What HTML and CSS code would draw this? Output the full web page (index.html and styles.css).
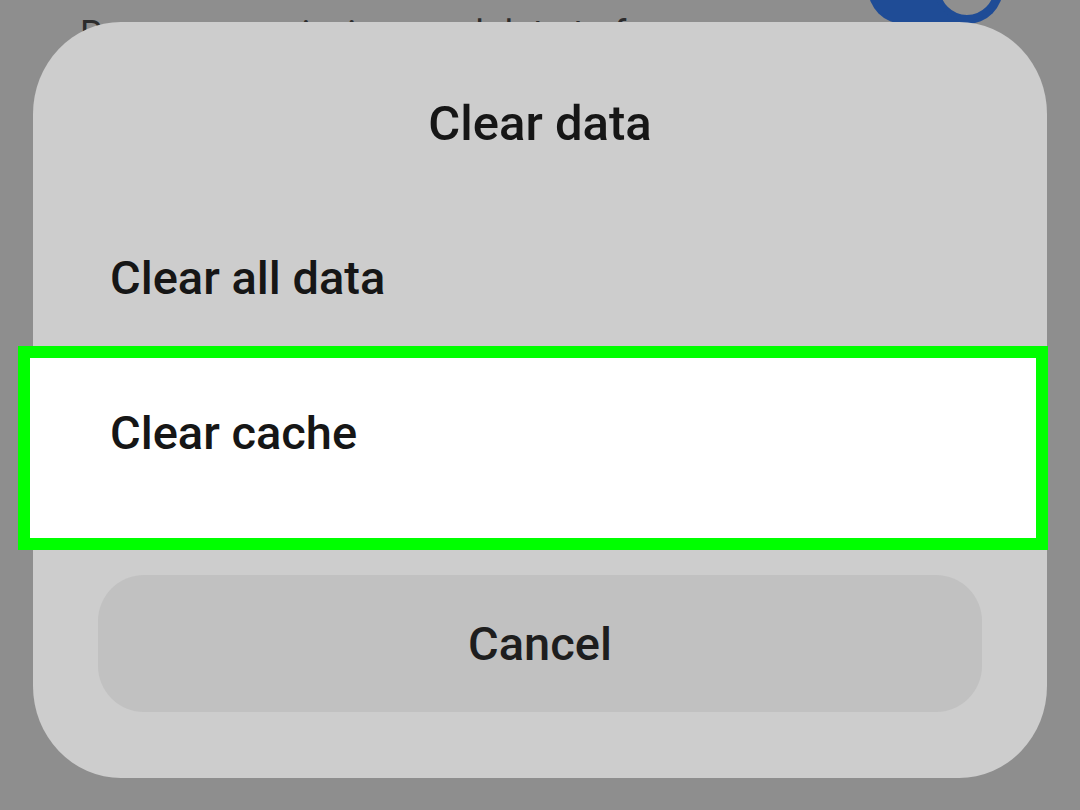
FILE: index.html
```html
<!DOCTYPE html>
<html lang="en">
<head>
<meta charset="utf-8">
<title>Clear data</title>
<link rel="stylesheet" href="styles.css">
</head>
<body>
<div class="screen">
  <div class="setting-row">
    <span class="setting-text">Remove permissions and data to free up space</span>
    <span class="toggle"><span class="knob"></span></span>
  </div>

  <div class="dialog">
    <div class="dialog-title">Clear data</div>
    <div class="option option-first">Clear all data</div>
    <div class="option option-selected">Clear cache</div>
    <div class="cancel">Cancel</div>
  </div>
</div>
</body>
</html>
```

FILE: styles.css
```css
html, body {
  margin: 0;
  padding: 0;
}

body {
  width: 1080px;
  height: 810px;
  overflow: hidden;
  background: #8e8e8e;
  font-family: Roboto, "Liberation Sans", Arial, sans-serif;
}

.screen {
  position: relative;
  width: 1080px;
  height: 810px;
}

.setting-row {
  display: flex;
  align-items: center;
  justify-content: space-between;
  height: 16px;
  padding: 0 77px 0 80px;
}

.setting-text {
  font-size: 36px;
  line-height: 44px;
  color: #2c2c2c;
  margin-top: 52px;
  white-space: nowrap;
}

.toggle {
  display: flex;
  justify-content: flex-end;
  align-items: center;
  width: 135px;
  height: 72px;
  margin-top: -40px;
  border-radius: 36px;
  background: #1f4c96;
  box-sizing: border-box;
}

.knob {
  width: 54px;
  height: 54px;
  border-radius: 50%;
  background: #8f8f8f;
  border: 6px solid #1f4c96;
  margin-right: 3px;
}

.dialog {
  position: absolute;
  left: 33px;
  top: 22px;
  width: 1014px;
  height: 756px;
  box-sizing: border-box;
  background: #cdcdcd;
  border-radius: 88px / 92px;
  padding-top: 72px;
  display: flex;
  flex-direction: column;
}

.dialog-title {
  text-align: center;
  font-size: 49px;
  line-height: 60px;
  font-weight: 500;
  color: #161616;
}

.option {
  font-size: 47px;
  line-height: 60px;
  font-weight: 500;
  color: #161616;
  padding-left: 77px;
}

.option-first {
  padding-top: 94px;
  padding-bottom: 50px;
}

.option-selected {
  background: #ffffff;
  margin: 0 11px 0 -3px;
  padding-top: 45px;
  padding-bottom: 75px;
  padding-left: 80px;
  outline: 12px solid #00ff00;
}

.cancel {
  margin: 37px 65px 0;
  height: 137px;
  border-radius: 46px;
  background: #c1c1c1;
  display: flex;
  align-items: center;
  justify-content: center;
  font-size: 47px;
  line-height: 60px;
  font-weight: 500;
  color: #1e1e1e;
}
```
